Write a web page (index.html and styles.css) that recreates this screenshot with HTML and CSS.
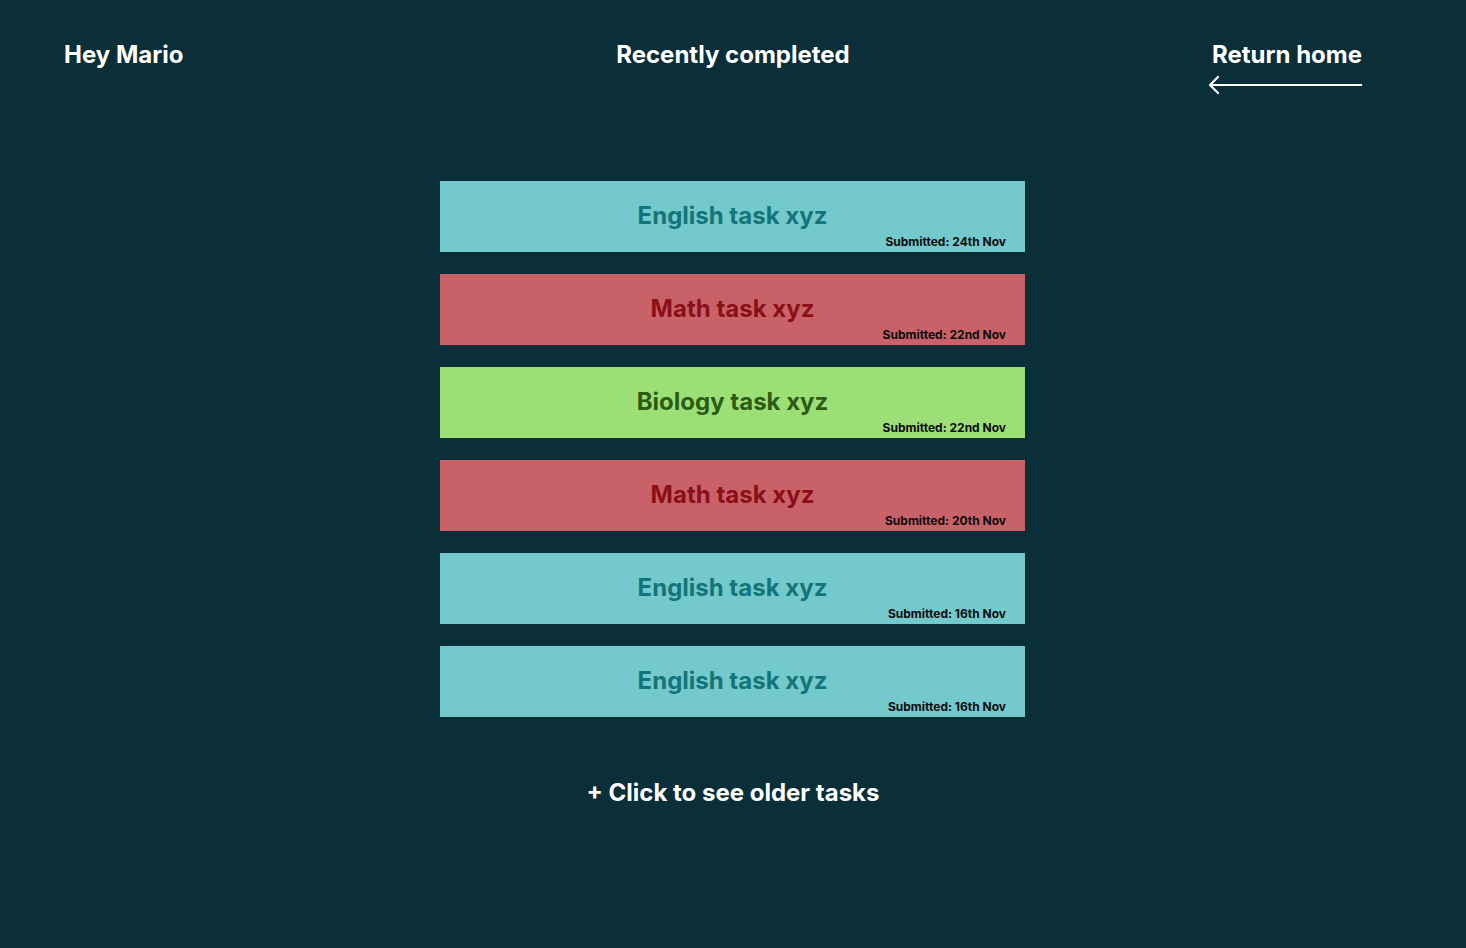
FILE: index.html
```html
<!DOCTYPE html>
<html lang="en">
<head>
<meta charset="utf-8">
<title>Recently completed</title>
<link rel="stylesheet" href="styles.css">
</head>
<body>
<div class="page">
  <header class="topbar">
    <div class="greet">Hey Mario</div>
    <h1 class="title">Recently completed</h1>
    <a class="home" href="#">
      <span class="home-label">Return home</span>
      <svg class="home-arrow" width="156" height="20" viewBox="0 0 156 20">
        <path d="M2 10 H154" stroke="#fff" stroke-width="2.2" fill="none"/>
        <path d="M10 2 L2 10 L10 18" stroke="#fff" stroke-width="2.2" fill="none" stroke-linecap="round" stroke-linejoin="round"/>
      </svg>
    </a>
  </header>

  <main class="tasks">
    <div class="card english"><div class="card-title">English task xyz</div><div class="card-date">Submitted: 24th Nov</div></div>
    <div class="card math"><div class="card-title">Math task xyz</div><div class="card-date">Submitted: 22nd Nov</div></div>
    <div class="card biology"><div class="card-title">Biology task xyz</div><div class="card-date">Submitted: 22nd Nov</div></div>
    <div class="card math"><div class="card-title">Math task xyz</div><div class="card-date">Submitted: 20th Nov</div></div>
    <div class="card english"><div class="card-title">English task xyz</div><div class="card-date">Submitted: 16th Nov</div></div>
    <div class="card english"><div class="card-title">English task xyz</div><div class="card-date">Submitted: 16th Nov</div></div>
  </main>

  <div class="more">+ Click to see older tasks</div>
</div>
</body>
</html>
```

FILE: styles.css
```css
* { box-sizing: border-box; }
html, body {
  margin: 0;
  padding: 0;
  background: #0a2f38;
  height: 100%;
}
body {
  font-family: Inter, "Noto Sans", "Liberation Sans", sans-serif;
  color: #ffffff;
}
.page {
  min-height: 948px;
  display: flex;
  flex-direction: column;
  align-items: center;
}
.topbar {
  width: 100%;
  display: grid;
  grid-template-columns: 1fr auto 1fr;
  align-items: start;
  padding: 40px 64px 0 64px;
}
.greet, .title, .home-label {
  font-size: 24px;
  font-weight: 700;
  line-height: 30px;
  margin: 0;
}
.greet { justify-self: start; }
.title { justify-self: center; }
.home {
  justify-self: end;
  margin-right: 40px;
  display: flex;
  flex-direction: column;
  align-items: flex-end;
  color: #fff;
  text-decoration: none;
}
.home-arrow {
  display: block;
  margin-top: 5px;
  margin-right: -2px;
}
.tasks {
  align-self: flex-start;
  margin: 86px 0 0 440px;
  width: 585px;
  display: flex;
  flex-direction: column;
  gap: 22px;
}
.card {
  height: 71px;
  display: flex;
  flex-direction: column;
  padding: 20px 19px 0 19px;
}
.card-title {
  text-align: center;
  font-size: 24px;
  font-weight: 700;
  line-height: 30px;
}
.card-date {
  align-self: flex-end;
  font-size: 12px;
  font-weight: 700;
  line-height: 15px;
  color: #0b0b0b;
  margin-top: 3px;
}
.english { background: #74c9cd; }
.english .card-title { color: #137579; }
.math { background: #c96268; }
.math .card-title { color: #8a0f18; }
.biology { background: #9ddf77; }
.biology .card-title { color: #2b5c12; }
.more {
  margin-top: 61px;
  font-size: 24px;
  font-weight: 700;
  line-height: 30px;
}
```
